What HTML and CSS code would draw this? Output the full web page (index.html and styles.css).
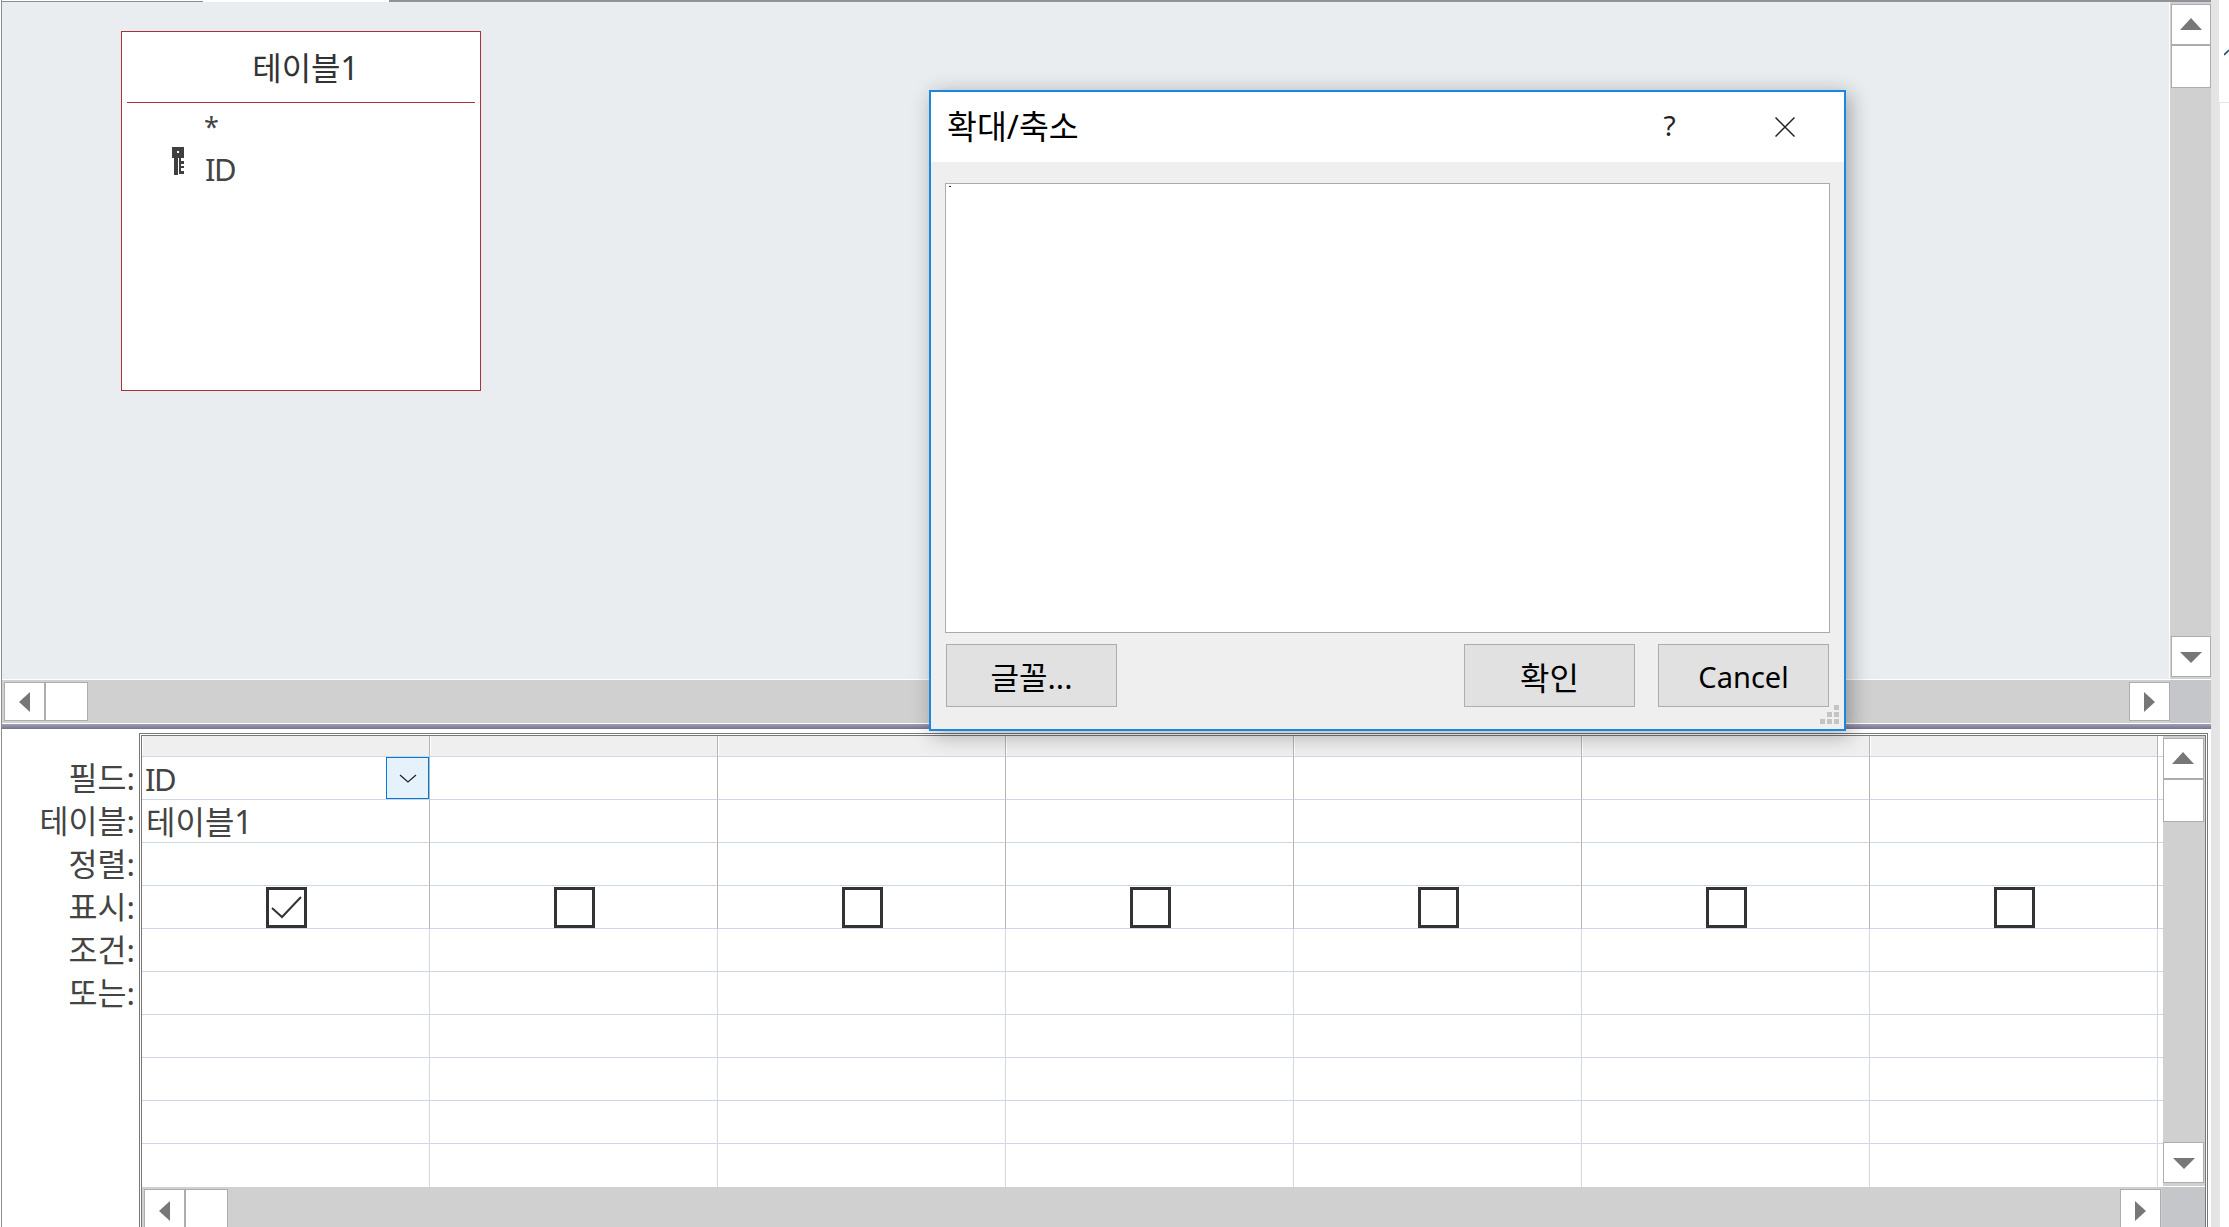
FILE: index.html
```html
<!DOCTYPE html>
<html lang="ko">
<head>
<meta charset="utf-8">
<title>확대/축소</title>
<link rel="stylesheet" href="styles.css">
</head>
<body>
<div class="app">
  <div class="workspace">
    <div class="tabstrip"><div class="tab-a"></div><div class="tab-b"></div><div class="tab-c"></div></div>
    <section class="upper">
      <div class="upper-main">
        <div class="canvas">
          <div class="tablebox">
            <div class="tablebox-title">테이블1</div>
            <div class="field-row field-star"><span class="key-slot"></span><span>*</span></div>
            <div class="field-row field-id">
              <svg class="key" width="12" height="28" viewBox="0 0 12 28" shape-rendering="crispEdges"><path fill="#3f3f3f" d="M0 0h12v11H0zM2 11h4v17H2zM7 11h2v16H7zM9 14h3v3H9zM9 19h3v2H9zM9 24h3v3H9z"/><path fill="#fff" d="M5 4h2v2H5z"/></svg>
              <span class="latin">ID</span>
            </div>
          </div>
        </div>
        <div class="vscroll">
          <div class="sbtn"><i class="tri up"></i></div>
          <div class="sthumb"></div>
          <div class="sfill"></div>
          <div class="sbtn"><i class="tri down"></i></div>
        </div>
      </div>
      <div class="hscroll">
        <div class="hbtn"><i class="tri left"></i></div>
        <div class="hthumb"></div>
        <div class="sfill"></div>
        <div class="hbtn"><i class="tri right"></i></div>
        <div class="corner"></div>
      </div>
    </section>
    <div class="splitter"></div>
    <section class="lower">
      <div class="labels">
        <div class="label">필드:</div>
        <div class="label">테이블:</div>
        <div class="label">정렬:</div>
        <div class="label">표시:</div>
        <div class="label">조건:</div>
        <div class="label">또는:</div>
      </div>
      <div class="frame">
        <div class="frame-main">
          <div class="grid">
            <div class="cell head"></div><div class="cell head"></div><div class="cell head"></div><div class="cell head"></div><div class="cell head"></div><div class="cell head"></div><div class="cell head"></div>

            <div class="cell dark text"><span class="latin">ID</span><div class="combo"><svg width="18" height="9" viewBox="0 0 18 9"><path d="M1 1l8 7 8-7" fill="none" stroke="#222" stroke-width="1.2"/></svg></div></div><div class="cell dark"></div><div class="cell dark"></div><div class="cell dark"></div><div class="cell dark"></div><div class="cell dark"></div><div class="cell dark"></div>

            <div class="cell dark text tname">테이블1</div><div class="cell dark"></div><div class="cell dark"></div><div class="cell dark"></div><div class="cell dark"></div><div class="cell dark"></div><div class="cell dark"></div>

            <div class="cell dark"></div><div class="cell dark"></div><div class="cell dark"></div><div class="cell dark"></div><div class="cell dark"></div><div class="cell dark"></div><div class="cell dark"></div>

            <div class="cell dark check"><span class="box"><svg width="34" height="34" viewBox="0 0 34 34"><path d="M3 18l10 9L32 7" fill="none" stroke="#333" stroke-width="2"/></svg></span></div><div class="cell dark check"><span class="box"></span></div><div class="cell dark check"><span class="box"></span></div><div class="cell dark check"><span class="box"></span></div><div class="cell dark check"><span class="box"></span></div><div class="cell dark check"><span class="box"></span></div><div class="cell dark check"><span class="box"></span></div>

            <div class="cell"></div><div class="cell"></div><div class="cell"></div><div class="cell"></div><div class="cell"></div><div class="cell"></div><div class="cell"></div>
            <div class="cell"></div><div class="cell"></div><div class="cell"></div><div class="cell"></div><div class="cell"></div><div class="cell"></div><div class="cell"></div>
            <div class="cell"></div><div class="cell"></div><div class="cell"></div><div class="cell"></div><div class="cell"></div><div class="cell"></div><div class="cell"></div>
            <div class="cell"></div><div class="cell"></div><div class="cell"></div><div class="cell"></div><div class="cell"></div><div class="cell"></div><div class="cell"></div>
            <div class="cell"></div><div class="cell"></div><div class="cell"></div><div class="cell"></div><div class="cell"></div><div class="cell"></div><div class="cell"></div>
            <div class="cell last"></div><div class="cell last"></div><div class="cell last"></div><div class="cell last"></div><div class="cell last"></div><div class="cell last"></div><div class="cell last"></div>
          </div>
          <div class="vscroll vscroll-low">
            <div class="sbtn"><i class="tri up"></i></div>
            <div class="sthumb"></div>
            <div class="sfill"></div>
            <div class="sbtn"><i class="tri down"></i></div>
          </div>
        </div>
        <div class="hscroll hscroll-low">
          <div class="hbtn"><i class="tri left"></i></div>
          <div class="hthumb"></div>
          <div class="sfill"></div>
          <div class="hbtn"><i class="tri right"></i></div>
          <div class="corner"></div>
        </div>
      </div>
    </section>
  </div>
  <div class="edge"></div>
  <div class="outside"><svg class="fragment" width="5" height="7" viewBox="0 0 5 7"><path d="M0 6l5-5" stroke="#2a4a7a" stroke-width="1.6"/></svg><div class="outside-box"></div></div>
</div>

<div class="dialog">
  <header class="dlg-title">
    <span class="dlg-name">확대/축소</span>
    <span class="dlg-ctl dlg-help">?</span>
    <span class="dlg-ctl"><svg width="20" height="20" viewBox="0 0 20 20"><path d="M.5.5l19 19M19.500.5l-19 19" fill="none" stroke="#222" stroke-width="1.5"/></svg></span>
  </header>
  <div class="dlg-body">
    <div class="zoombox"></div>
    <div class="dlg-actions">
      <button class="btn btn-font" type="button">글꼴...</button>
      <button class="btn btn-ok" type="button">확인</button>
      <button class="btn btn-latin" type="button">Cancel</button>
    </div>
    <svg class="grip" width="19" height="19" viewBox="0 0 19 19" shape-rendering="crispEdges"><path fill="#c4c4c4" d="M14 0h5v5h-5zM7 7h5v5H7zM14 7h5v5h-5zM0 14h5v5H0zM7 14h5v5H7zM14 14h5v5h-5z"/></svg>
  </div>
</div>
</body>
</html>
```
FILE: styles.css
```css
* { box-sizing: border-box; }
html, body { margin: 0; padding: 0; height: 100%; overflow: hidden; background: #fff; }
body {
  font-family: "Noto Sans", "Noto Sans CJK KR", sans-serif;
  font-size: 30px;
  color: #444;
  position: relative;
}
.app { display: flex; width: 2229px; height: 1227px; }
.workspace {
  width: 2210px;
  margin-left: 1px;
  border-left: 1px solid #8a8d92;
  display: flex;
  flex-direction: column;
}
.edge { width: 8px; background: #e4e4e4; }
.outside { flex: 1; position: relative; background: #fff; }
.fragment { position: absolute; left: 5px; top: 49px; }
.outside-box { position: absolute; left: 0; right: 0; top: 102px; bottom: 0; border-top: 1px solid #e6e6e6; border-left: 1px solid #e6e6e6; }
.latin { font-family: "Noto Sans", "Open Sans", sans-serif; font-weight: 400; font-size: 31px; letter-spacing: -1.5px; }

/* top strip */
.tabstrip { display: flex; height: 2px; flex: none; }
.tab-a { width: 201px; background: #fff; border-bottom: 1px solid #8a8d92; }
.tab-b { width: 186px; background: #fff; }
.tab-c { flex: 1; background: #8f9298; }

/* upper pane */
.upper { display: flex; flex-direction: column; flex: none; }
.upper-main { display: flex; height: 677px; }
.canvas { flex: 1; position: relative; background: #e9edf0; border-right: 1px solid #fff; }
.tablebox {
  position: absolute; left: 119px; top: 29px; width: 360px; height: 360px;
  background: #fff; border: 1px solid #a83238;
}
.tablebox-title {
  height: 71px; margin: 0 5px; padding: 0 0 3px 9px;
  display: flex; align-items: center; justify-content: center;
  border-bottom: 1px solid #a83238;
  color: #333; font-size: 32px;
}
.field-row { display: flex; align-items: flex-start; padding-left: 50px; }
.key-slot { width: 12px; margin-right: 20px; }
.key { margin-right: 21px; margin-top: 4px; flex: none; }
.field-star { height: 40px; line-height: 48px; font-size: 27px; }
.field-id { height: 52px; }
.field-id .latin { line-height: 52px; }

/* scrollbars */
.vscroll { width: 41px; flex: none; display: flex; flex-direction: column; padding: 2px 0 2px 1px; background: #d0d0d0; }
.vscroll-low { padding: 2px 1px 3px 0; height: 450px; width: 42px; }
.sbtn { height: 41px; flex: none; background: #fff; border: 1px solid #adadad; display: flex; align-items: center; justify-content: center; }
.sthumb { height: 43px; flex: none; background: #fff; border: 1px solid #adadad; }
.sfill { flex: 1; }
.hscroll { display: flex; height: 45px; padding: 2px 0 2px 0; background: #d0d0d0; border-top: 1px solid #fff; border-bottom: 1px solid #fff; }
.hscroll-low { height: 46px; padding: 2px 0 0 2px; border: 0; }
.hbtn { width: 41px; flex: none; background: #fff; border: 1px solid #adadad; display: flex; align-items: center; justify-content: center; }
.hthumb { width: 43px; flex: none; background: #fff; border: 1px solid #adadad; }
.corner { width: 41px; flex: none; margin: -2px 0; background: #c4c6ca; }
.hscroll > .hbtn:first-child { margin-left: 2px; }
.hscroll-low > .hbtn:first-child { margin-left: 0; }
.hscroll-low .corner { margin: -2px 0 0 1px; width: 43px; }
.tri { display: block; width: 0; height: 0; border-style: solid; border-color: transparent; }
.up { border-width: 0 11px 12px; border-bottom-color: #777; margin-top: -1px; }
.vscroll-low .up { margin-right: 1px; }
.down { border-width: 11px 11px 0; border-top-color: #777; margin-top: 2px; }
.left { border-width: 10px 11px 10px 0; border-right-color: #777; }
.right { border-width: 10px 0 10px 11px; border-left-color: #777; }

.splitter { height: 5px; flex: none; background: linear-gradient(#a0a0b8, #73738f); }

/* lower pane */
.lower { display: flex; flex: 1; min-height: 0; padding-top: 4px; background: #fff; }
.labels { width: 137px; flex: none; padding: 24px 4px 0 0; }
.label { height: 43px; line-height: 42px; text-align: right; white-space: nowrap; font-size: 31.5px; }
.frame { flex: none; width: 2069px; height: 520px; border: 3px double #777; border-bottom: 0; display: flex; flex-direction: column; }
.frame-main { display: flex; }
.grid { flex: 1; display: grid; grid-template-columns: repeat(7, 288px); grid-template-rows: 21px repeat(9, 43px) 43px; background: #fff; }
.cell { position: relative; border-bottom: 1px solid #d0d6e6; border-right: 1px solid #d5d9e6; }
.cell:nth-child(7n)::after { content: ""; position: absolute; left: 100%; bottom: -1px; width: 5px; height: 1px; margin-left: 1px; background: #d0d6e6; }
.cell.last { border-bottom: 0; }
.cell.last::after { display: none; }
.cell.dark { border-right-color: #b4b4b4; }
.cell.head { background: #efefef; border-right-color: #b4b4b4; box-shadow: inset 1px 0 #fff; }
.cell.text { padding-left: 3px; line-height: 44px; }
.cell.tname { padding-left: 4px; font-size: 32px; line-height: 43px; }
.combo {
  position: absolute; right: 0; top: 0; width: 43px; height: 42px;
  background: #e5f1fb; border: 1px solid #0078d7;
  display: flex; align-items: center; justify-content: center;
}
.cell.check { display: flex; justify-content: center; align-items: flex-end; padding-left: 1px; }
.box { display: block; width: 41px; height: 41px; border: 3px solid #333; background: #fff; }
.box svg { display: block; }

/* dialog */
.dialog {
  position: absolute; left: 929px; top: 90px; width: 917px; height: 641px;
  background: #efefef; border: 2px solid #1c86dc;
  box-shadow: 4px 4px 20px rgba(0, 0, 0, .32);
  display: flex; flex-direction: column;
  color: #000;
}
.dlg-title { height: 70px; flex: none; background: #fff; display: flex; align-items: center; padding: 0 2px 0 16px; }
.dlg-name { flex: 1; font-size: 32.500px; padding-bottom: 5px; }
.dlg-ctl { width: 115px; display: flex; align-items: center; justify-content: center; }
.dlg-help { font-size: 28px; color: #222; padding-bottom: 4px; }
.dlg-body { flex: 1; position: relative; padding: 21px 14px 0; display: flex; flex-direction: column; }
.zoombox { height: 450px; flex: none; background: #fff; border: 1px solid #ababab; position: relative; }
.zoombox::before { content: ""; position: absolute; left: 3px; top: 2px; width: 2px; height: 1px; background: #402040; }
.dlg-actions { display: flex; margin-top: 11px; padding: 0 1px; }
.btn {
  width: 171px; height: 63px; padding: 0; background: #e1e1e1; border: 1px solid #adadad;
  font: inherit; font-size: 31px; color: #000;
}
.btn-font { margin-right: auto; }
.btn-ok { margin-right: 23px; font-size: 32px; }
.btn-latin { font-size: 29px; padding-top: 2px; }
.grip { position: absolute; right: 5px; bottom: 5px; }
```
